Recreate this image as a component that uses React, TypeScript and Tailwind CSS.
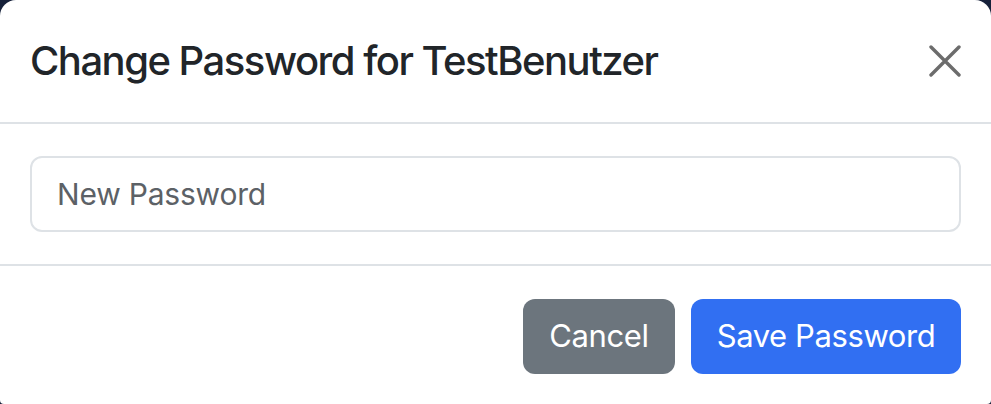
import React from 'react';

export default function App() {
  return (
    <div className="w-[991px] h-[404px] bg-[#16213a] overflow-hidden" style={{ fontFamily: 'Inter, "Liberation Sans", sans-serif' }}>
      <div className="w-full h-full bg-white rounded-t-[16px] rounded-b-[4px] flex flex-col">
        {/* Header */}
        <div className="h-[124px] px-[30px] flex items-center justify-between border-b-2 border-[#dee2e6]">
          <h5 className="text-[40px] font-medium text-[#212529] tracking-[-1.5px] leading-none">
            Change Password for TestBenutzer
          </h5>
          <button className="w-[32px] h-[32px] flex items-center justify-center text-[#6c6c6c]">
            <svg width="32" height="32" viewBox="0 0 32 32" fill="none" stroke="currentColor" strokeWidth="3.4" strokeLinecap="round">
              <path d="M2 2 L30 30 M30 2 L2 30" />
            </svg>
          </button>
        </div>

        {/* Body */}
        <div className="px-[30px] py-[32px] border-b-2 border-[#dee2e6]">
          <input
            type="password"
            placeholder="New Password"
            className="w-full h-[76px] px-[25px] rounded-[12px] border-2 border-[#dee2e6] text-[30px] tracking-[-0.2px] text-[#212529] placeholder:text-[#5c6166] outline-none"
          />
        </div>

        {/* Footer */}
        <div className="flex-1 px-[30px] pt-[33px] flex justify-end items-start gap-[16px]">
          <button className="h-[75px] w-[152px] rounded-[12px] bg-[#6c757d] text-white text-[31px] tracking-[-0.4px]">
            Cancel
          </button>
          <button className="h-[75px] w-[270px] rounded-[12px] bg-[#316ff2] text-white text-[31px] tracking-[-0.4px]">
            Save Password
          </button>
        </div>
      </div>
    </div>
  );
}
